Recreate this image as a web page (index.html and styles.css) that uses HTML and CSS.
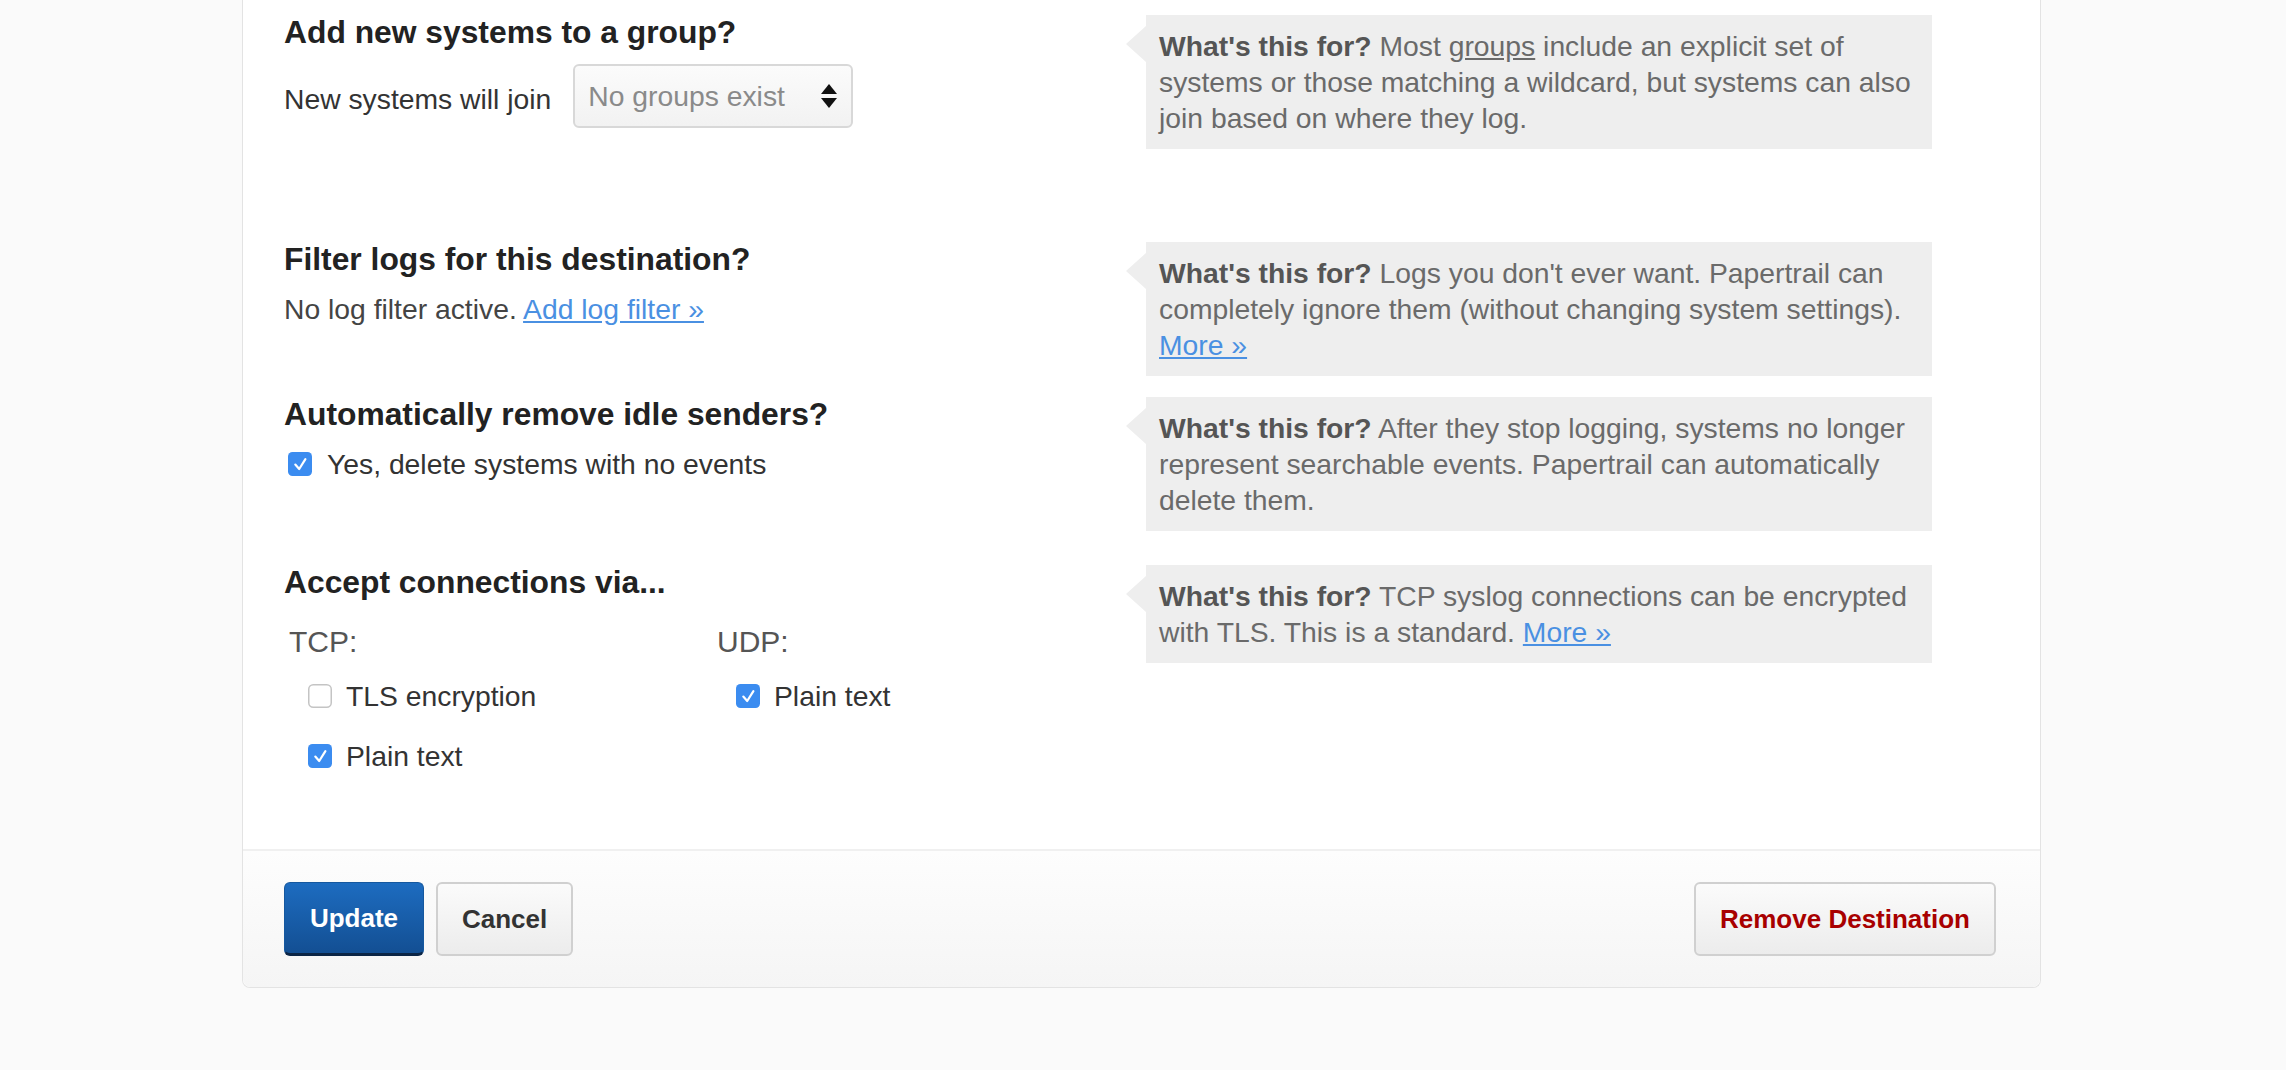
FILE: index.html
```html
<!DOCTYPE html>
<html lang="en">
<head>
<meta charset="utf-8">
<title>Edit destination</title>
<link rel="stylesheet" href="styles.css">
</head>
<body>
<div class="page">
  <div class="card">
    <div class="card-body">

      <div class="row row-groups">
        <div class="field">
          <h3 class="field-title">Add new systems to a group?</h3>
          <div class="join-line">
            <span class="join-label">New systems will join</span>
            <div class="select">
              <span class="select-text">No groups exist</span>
              <svg class="select-arrows" width="16" height="24" viewBox="0 0 16 24"><path d="M8 0 L16 10 L0 10 Z" fill="#111"/><path d="M0 14 L16 14 L8 24 Z" fill="#111"/></svg>
            </div>
          </div>
        </div>
        <div class="help">
          <p class="help-text"><b class="help-lead">What's this for?</b> Most <span class="help-term">groups</span> include an explicit set of systems or those matching a wildcard, but systems can also join based on where they log.</p>
        </div>
      </div>

      <div class="row row-filter">
        <div class="field">
          <h3 class="field-title">Filter logs for this destination?</h3>
          <p class="field-text">No log filter active. <a class="link" href="#">Add log filter »</a></p>
        </div>
        <div class="help">
          <p class="help-text"><b class="help-lead">What's this for?</b> Logs you don't ever want. Papertrail can completely ignore them (without changing system settings). <a class="link" href="#">More »</a></p>
        </div>
      </div>

      <div class="row row-idle">
        <div class="field">
          <h3 class="field-title">Automatically remove idle senders?</h3>
          <label class="check-line">
            <svg class="cb" width="24" height="24" viewBox="0 0 24 24"><rect width="24" height="24" rx="4.5" fill="#3b8cf0"/><path d="M7.3 12.6 L11.2 17 L17.4 7.2" stroke="#fff" stroke-width="2.2" fill="none" stroke-linecap="round" stroke-linejoin="round"/></svg>
            <span>Yes, delete systems with no events</span>
          </label>
        </div>
        <div class="help">
          <p class="help-text"><b class="help-lead">What's this for?</b> After they stop logging, systems no longer represent searchable events. Papertrail can automatically delete them.</p>
        </div>
      </div>

      <div class="row row-conn">
        <div class="field">
          <h3 class="field-title">Accept connections via...</h3>
          <div class="proto-grid">
            <div class="proto-col">
              <div class="proto-label">TCP:</div>
              <label class="proto-option">
                <svg class="cb" width="24" height="24" viewBox="0 0 24 24"><rect x="0.75" y="0.75" width="22.5" height="22.5" rx="4.5" fill="#fff" stroke="#c4c4c4" stroke-width="1.5"/></svg>
                <span>TLS encryption</span>
              </label>
              <label class="proto-option proto-option-next">
                <svg class="cb" width="24" height="24" viewBox="0 0 24 24"><rect width="24" height="24" rx="4.5" fill="#3b8cf0"/><path d="M7.3 12.6 L11.2 17 L17.4 7.2" stroke="#fff" stroke-width="2.2" fill="none" stroke-linecap="round" stroke-linejoin="round"/></svg>
                <span>Plain text</span>
              </label>
            </div>
            <div class="proto-col">
              <div class="proto-label">UDP:</div>
              <label class="proto-option">
                <svg class="cb" width="24" height="24" viewBox="0 0 24 24"><rect width="24" height="24" rx="4.5" fill="#3b8cf0"/><path d="M7.3 12.6 L11.2 17 L17.4 7.2" stroke="#fff" stroke-width="2.2" fill="none" stroke-linecap="round" stroke-linejoin="round"/></svg>
                <span>Plain text</span>
              </label>
            </div>
          </div>
        </div>
        <div class="help">
          <p class="help-text"><b class="help-lead">What's this for?</b> TCP syslog connections can be encrypted with TLS. This is a standard. <a class="link" href="#">More »</a></p>
        </div>
      </div>

    </div>
    <div class="card-footer">
      <div class="footer-left">
        <button class="btn btn-primary" type="button">Update</button>
        <button class="btn btn-default" type="button">Cancel</button>
      </div>
      <button class="btn btn-default btn-danger" type="button">Remove Destination</button>
    </div>
  </div>
</div>
</body>
</html>
```

FILE: styles.css
```css
html, body {
  margin: 0;
  padding: 0;
}

body {
  background: #fafafa;
  font-family: "Liberation Sans", Arial, Helvetica, sans-serif;
  color: #333;
}

.page {
  padding-left: 242px;
}

.card {
  width: 1799px;
  box-sizing: border-box;
  background: #fff;
  border: 1px solid #e3e3e3;
  border-top: none;
  border-radius: 0 0 8px 8px;
}

.card-body {
  padding: 14px 108px 75px 41px;
}

.row {
  display: flex;
  align-items: flex-start;
}

.row-groups { margin-bottom: 92px; }
.row-filter { margin-bottom: 20px; }
.row-idle { margin-bottom: 33px; }

.field {
  flex: 0 0 842px;
  min-width: 0;
  margin-right: 20px;
}

.field-title {
  margin: 0;
  font-size: 31.8px;
  line-height: 36px;
  font-weight: bold;
  color: #222;
}

.join-line {
  display: flex;
  align-items: flex-start;
  gap: 22px;
  margin-top: 14px;
}

.join-label {
  margin-top: 17px;
  font-size: 28.3px;
  line-height: 36px;
  color: #333;
}

.select {
  width: 280px;
  height: 64px;
  box-sizing: border-box;
  border: 2px solid #d8d8d8;
  border-radius: 6px;
  background: linear-gradient(#fbfbfb, #f2f2f2);
  display: flex;
  align-items: center;
  justify-content: space-between;
  padding: 0 14px 0 13px;
}

.select-text {
  font-size: 28.3px;
  color: #8a8a8a;
}

.select-arrows {
  display: block;
  flex: none;
}

.field-text {
  margin: 14px 0 0;
  font-size: 28.3px;
  line-height: 36px;
  color: #444;
}

.link {
  color: #4a90e2;
  text-decoration: underline;
}

.check-line {
  display: flex;
  align-items: center;
  gap: 15px;
  margin-top: 14px;
  padding-left: 4px;
  font-size: 28.3px;
  line-height: 36px;
  color: #333;
}

.cb {
  flex: none;
  display: block;
}

.proto-grid {
  display: grid;
  grid-template-columns: 428px 1fr;
  margin-top: 24px;
}

.proto-label {
  padding-left: 5px;
  font-size: 30px;
  line-height: 36px;
  color: #555;
}

.proto-option {
  display: flex;
  align-items: center;
  gap: 14px;
  padding-left: 24px;
  margin-top: 18px;
  font-size: 28.3px;
  line-height: 36px;
  color: #333;
}

.proto-option-next {
  margin-top: 24px;
}

.help {
  position: relative;
  flex: 0 0 786px;
  box-sizing: border-box;
  margin-top: 1px;
  padding: 13px 12px 13px 13px;
  background: #eeeeee;
}

.help::before {
  content: "";
  position: absolute;
  left: -20px;
  top: 11px;
  border-style: solid;
  border-width: 18px 20px 18px 0;
  border-color: transparent #eeeeee transparent transparent;
}

.help-text {
  margin: 0;
  font-size: 28.3px;
  line-height: 36px;
  color: #6a6a6a;
}

.help-lead {
  font-weight: bold;
  color: #555;
}

.help-term {
  text-decoration: underline;
}

.card-footer {
  display: flex;
  justify-content: space-between;
  align-items: center;
  border-top: 2px solid #f0f0f0;
  background: linear-gradient(#fdfdfd, #f5f5f5);
  border-radius: 0 0 8px 8px;
  padding: 31px 44px 31px 41px;
}

.footer-left {
  display: flex;
  gap: 12px;
}

.btn {
  height: 74px;
  box-sizing: border-box;
  padding: 0 24px;
  border-radius: 6px;
  font-family: "Liberation Sans", Arial, Helvetica, sans-serif;
  font-size: 26px;
  font-weight: bold;
  cursor: pointer;
}

.btn-primary {
  width: 140px;
  color: #fff;
  background: linear-gradient(#1d6cc0, #134f93);
  border: 1px solid #15589f;
  border-bottom: 3px solid #0b2546;
}

.btn-default {
  color: #333;
  background: linear-gradient(#fbfbfb, #ececec);
  border: 2px solid #d0d0d0;
}

.footer-left .btn-default {
  width: 137px;
}

.btn-danger {
  width: 302px;
  color: #a80000;
}
```
